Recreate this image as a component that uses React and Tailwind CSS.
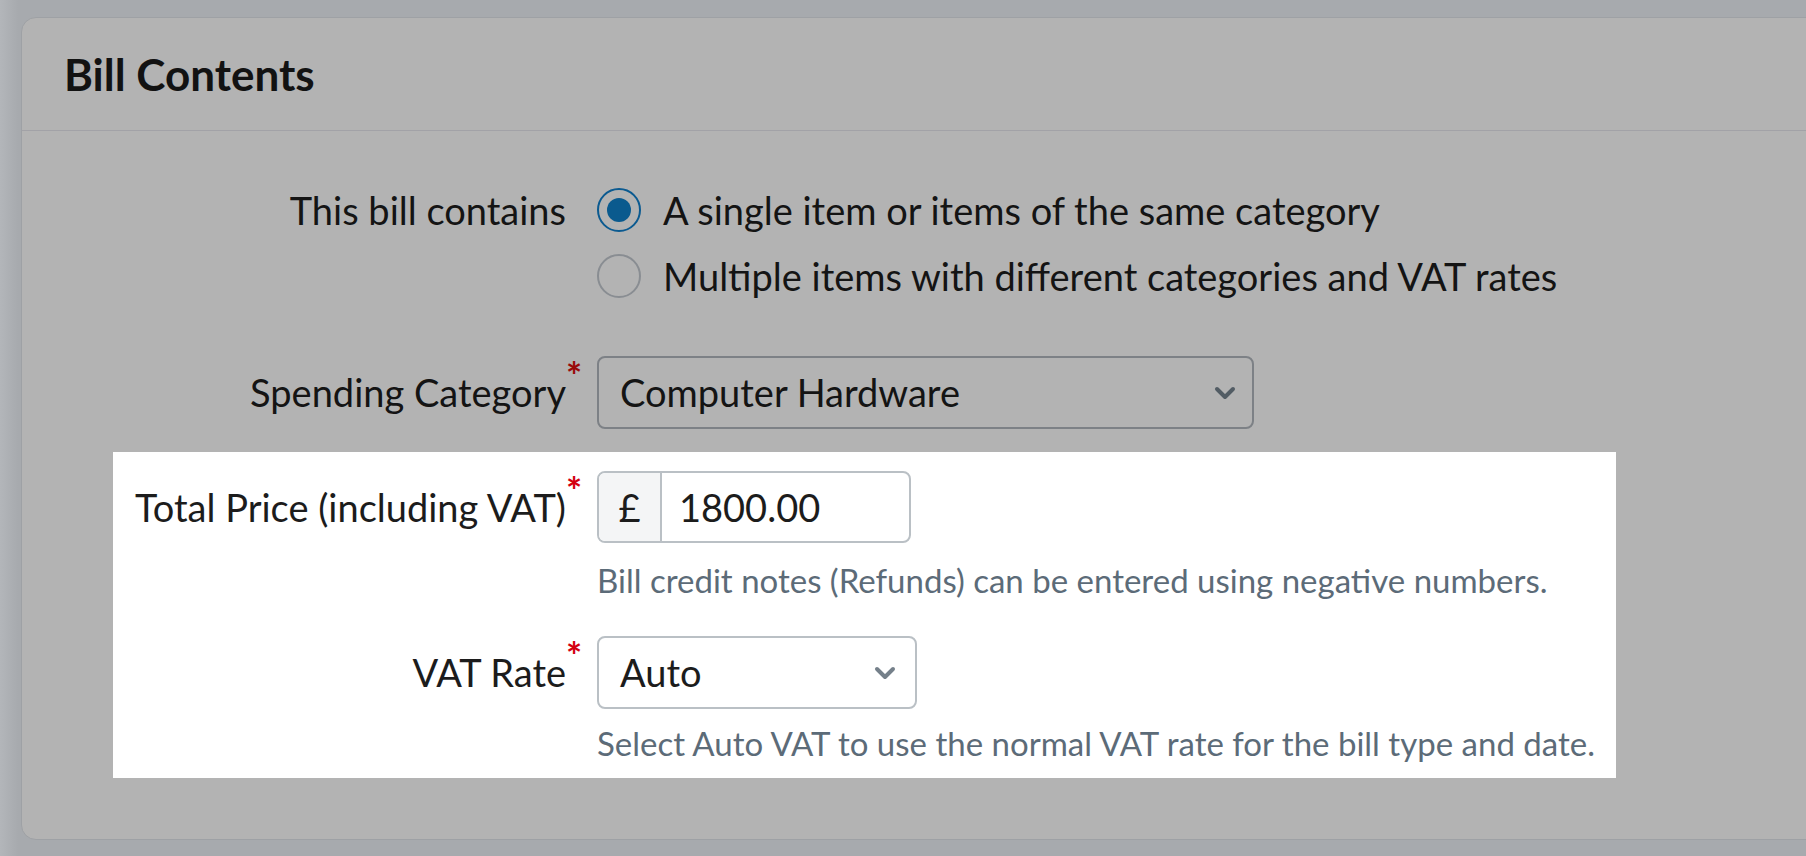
import React from "react";

function Chevron({ color }) {
  return (
    <svg width="22" height="14" viewBox="0 0 22 14" className="shrink-0">
      <polyline points="3,3 11,11 19,3" fill="none" stroke={color} strokeWidth="4" strokeLinecap="round" strokeLinejoin="round" />
    </svg>
  );
}

function Label({ children, required, dim }) {
  return (
    <div className="w-[484px] shrink-0 pr-[31px] text-right">
      <span className={`relative inline-block text-[38px] leading-[43px] ${dim ? "text-[#141414]" : "text-[#1c1c1c]"}`}>
        {children}
        {required && (
          <span className={`absolute left-full top-[-15px] text-[38px] leading-none font-bold ${dim ? "text-[#9a0a0a]" : "text-[#d40010]"}`}>*</span>
        )}
      </span>
    </div>
  );
}

export default function App() {
  return (
    <div className="w-[1806px] h-[856px] overflow-hidden bg-[linear-gradient(90deg,#b3b6ba_0px,#a7aaae_18px)] pt-[17px] pl-[21px] font-[family-name:Lato,sans-serif]">
      <div className="w-[1800px] h-[823px] rounded-[15px] border border-[#9ea1a5] bg-[#b3b3b3]">
        <div className="h-[113px] border-b border-[#a2a2a7] flex items-center pl-[42px]">
          <h2 className="text-[44px] font-bold text-[#121212]">Bill Contents</h2>
        </div>
        <div className="pt-[46px] pl-[91px]">
          {/* radios */}
          <div className="flex">
            <div className="w-[484px] shrink-0 pr-[31px] text-right text-[38px] leading-[66px] text-[#141414]">This bill contains</div>
            <div className="flex flex-col">
              <div className="flex items-center h-[66px] gap-[22px]">
                <span className="w-[44px] h-[44px] rounded-full border-2 border-[#0b5a90] flex items-center justify-center">
                  <span className="w-[24px] h-[24px] rounded-full bg-[#0a5a8e]" />
                </span>
                <span className="text-[38px] text-[#141414]">A single item or items of the same category</span>
              </div>
              <div className="flex items-center h-[66px] gap-[22px]">
                <span className="w-[44px] h-[44px] rounded-full border-2 border-[#898d92]" />
                <span className="text-[38px] text-[#141414]">Multiple items with different categories and VAT rates</span>
              </div>
            </div>
          </div>

          {/* spending category */}
          <div className="flex items-center mt-[47px]">
            <Label required dim>Spending Category</Label>
            <div className="w-[657px] h-[73px] rounded-[8px] border-2 border-[#7d8186] flex items-center justify-between pl-[21px] pr-[16px]">
              <span className="text-[38px] text-[#141414]">Computer Hardware</span>
              <Chevron color="#525c64" />
            </div>
          </div>

          {/* highlighted */}
          <div className="mt-[23px] w-[1503px] bg-white pt-[19px] pb-[17px]">
            <div className="flex items-center">
              <Label required>Total Price (including VAT)</Label>
              <div className="w-[314px] h-[72px] rounded-[8px] border-2 border-[#bac0c5] flex overflow-hidden">
                <div className="w-[63px] h-full bg-[#f4f5f6] border-r-2 border-[#bac0c5] flex items-center justify-center text-[38px] text-[#1c1c1c]">£</div>
                <div className="flex items-center pl-[17px] text-[38px] text-[#1c1c1c]">1800.00</div>
              </div>
            </div>
            <div className="ml-[484px] mt-[19px] text-[33px] leading-[36px] text-[#5c6b78]">Bill credit notes (Refunds) can be entered using negative numbers.</div>

            <div className="flex items-center mt-[38px]">
              <Label required>VAT Rate</Label>
              <div className="w-[320px] h-[73px] rounded-[8px] border-2 border-[#bac0c5] flex items-center justify-between pl-[21px] pr-[19px]">
                <span className="text-[38px] text-[#1c1c1c]">Auto</span>
                <Chevron color="#75808a" />
              </div>
            </div>
            <div className="ml-[484px] mt-[16px] text-[33px] leading-[36px] text-[#5c6b78]">Select Auto VAT to use the normal VAT rate for the bill type and date.</div>
          </div>
        </div>
      </div>
    </div>
  );
}
